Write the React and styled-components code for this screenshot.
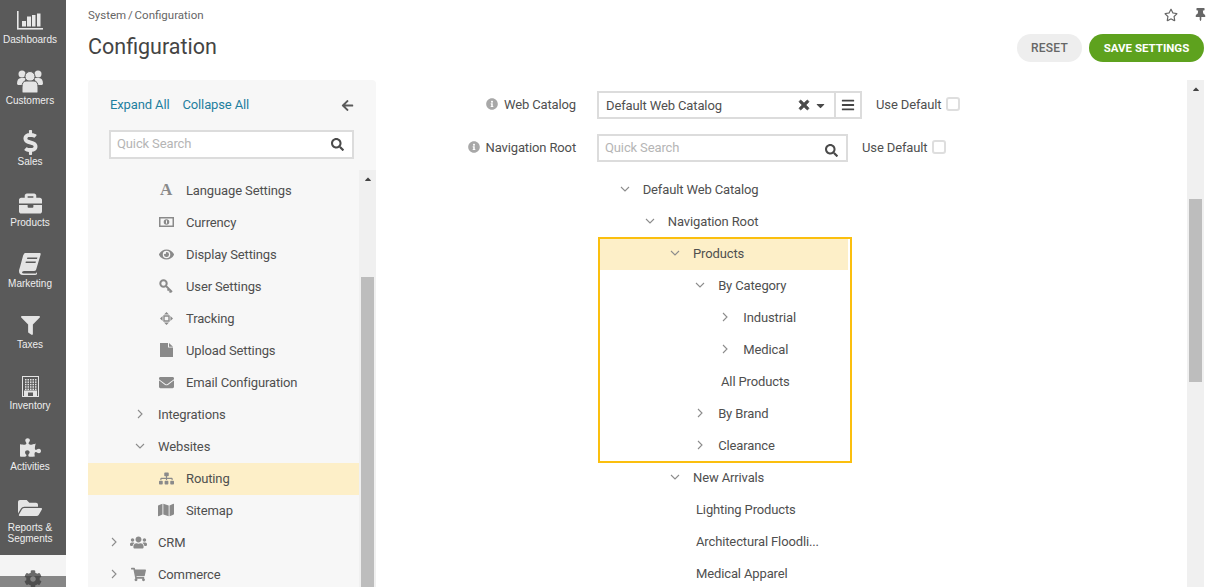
import React from "react";
import styled, { createGlobalStyle } from "styled-components";
import {
  FaDollarSign, FaBriefcase, FaFilter, FaPuzzlePiece, FaFolderOpen, FaCog,
  FaEye, FaEnvelope, FaSitemap, FaMap, FaUsers,
  FaShoppingCart, FaInfoCircle, FaRegStar, FaThumbtack, FaSearch, FaArrowLeft,
  FaTimes, FaCaretDown, FaCaretUp, FaBars,
} from "react-icons/fa";

const GlobalStyle = createGlobalStyle`
  html, body {
    margin: 0;
    height: 100%;
    overflow: hidden;
    background: #fff;
    font-family: Roboto, "Liberation Sans", sans-serif;
    font-size: 13px;
    letter-spacing: -0.13px;
    color: #4f4f4f;
  }
`;

const Shell = styled.div`
  display: flex;
  height: 587px;
  overflow: hidden;
`;

const Rail = styled.nav`
  position: relative;
  flex: 0 0 66px;
  background: #5a5a5a;
  overflow: hidden;
`;

const RailItem = styled.div`
  height: ${(p) => p.$height || 61}px;
  display: flex;
  flex-direction: column;
  align-items: center;
  box-sizing: border-box;
  padding: ${(p) => (p.$active ? "12px 0 0" : "8px 6px 0 0")};
  color: #e4e4e4;
  background: ${(p) => (p.$active ? "#f4f4f4" : "transparent")};
`;

const RailIcon = styled.div`
  height: 24px;
  display: flex;
  align-items: center;
  justify-content: center;
  color: ${(p) => p.$color || "#e4e4e4"};
`;

const RailLabel = styled.div`
  margin-top: 2px;
  font-family: "Liberation Sans", Arial, sans-serif;
  font-size: 10px;
  letter-spacing: 0;
  line-height: 11px;
  text-align: center;
  color: #eee;
`;

const RailShade = styled.div`
  position: absolute;
  left: 0;
  right: 0;
  bottom: 0;
  height: 11px;
  background: rgba(60, 60, 60, 0.6);
`;

const Main = styled.main`
  flex: 1;
  min-width: 0;
  display: flex;
  flex-direction: column;
  padding: 0 21px 0 22px;
`;

const Header = styled.header`
  flex: 0 0 80px;
  display: flex;
  justify-content: space-between;
`;

const Crumbs = styled.div`
  font-size: 11.5px;
  letter-spacing: 0;
  word-spacing: -1px;
  line-height: 14px;
  padding-top: 8px;
  color: #666;
`;

const Title = styled.h1`
  margin: 10px 0 0;
  font-size: 21.5px;
  letter-spacing: 0;
  line-height: 30px;
  font-weight: 400;
  color: #444;
`;

const HeaderSide = styled.div`
  display: flex;
  flex-direction: column;
  align-items: flex-end;
`;

const Shortcuts = styled.div`
  height: 34px;
  display: flex;
  align-items: flex-start;
  padding-top: 8px;
  margin-right: -3px;
  box-sizing: border-box;
  gap: 16px;
  color: #666;
  svg { display: block; }
`;

const Actions = styled.div`
  display: flex;
  gap: 7px;
`;

const PillButton = styled.button`
  height: 28px;
  padding: 0;
  width: ${(p) => p.$width}px;
  border: 0;
  border-radius: 14px;
  font-family: inherit;
  font-size: ${(p) => (p.$primary ? 11.5 : 12)}px;
  letter-spacing: ${(p) => (p.$primary ? 0 : 0.2)}px;
  font-weight: ${(p) => (p.$primary ? 700 : 500)};
  color: ${(p) => (p.$primary ? "#fff" : "#666")};
  background: ${(p) => (p.$primary ? "#5ea21e" : "#eeeeee")};
`;

const Body = styled.div`
  flex: 1;
  min-height: 0;
  display: flex;
`;

const SidePanel = styled.aside`
  flex: 0 0 288px;
  display: flex;
  flex-direction: column;
  background: #f7f7f7;
  border-radius: 4px 4px 0 0;
`;

const SideTools = styled.div`
  flex: 0 0 90px;
  box-sizing: border-box;
  padding: 14px 22px 0 21px;
`;

const LinkRow = styled.div`
  display: flex;
  align-items: center;
  height: 20px;
  gap: 13px;
  margin-bottom: 16px;
  padding-left: 1px;
`;

const TextLink = styled.a`
  color: #1f7f9f;
`;

const BackArrow = styled.span`
  margin: 2px 0 0 auto;
  display: flex;
  color: #5a5a5a;
`;

const SearchBox = styled.div`
  box-sizing: border-box;
  width: ${(p) => p.$width}px;
  height: ${(p) => p.$height || 28}px;
  display: flex;
  align-items: center;
  justify-content: space-between;
  padding: 0 8px 0 6px;
  border: 2px solid #dcdcdc;
  background: #fff;
  color: #b5b5b5;
  svg {
    color: #4a4a4a;
    margin-top: ${(p) => p.$iconDrop || 0}px;
  }
`;

const Placeholder = styled.span`
  margin-bottom: 2px;
`;

const SideScrollArea = styled.div`
  flex: 1;
  min-height: 0;
  display: flex;
`;

const SideTree = styled.div`
  flex: 1;
  padding-top: 5px;
  overflow: hidden;
`;

const Row = styled.div`
  height: 32px;
  box-sizing: border-box;
  display: flex;
  align-items: center;
  padding-left: ${(p) => p.$indent}px;
  background: ${(p) => (p.$selected ? "#fdefc8" : "transparent")};
  white-space: nowrap;
`;

const SideItem = styled(Row)`
  padding-bottom: 2px;
`;

const TreeItem = styled(Row)`
  box-shadow: ${(p) => (p.$selected ? "0 1px 0 #fdefc8" : "none")};
`;

const Toggle = styled.span`
  flex: 0 0 12px;
  display: flex;
  justify-content: center;
  margin-right: ${(p) => p.$gap ?? 0}px;
`;

const Glyph = styled.span`
  flex: 0 0 24px;
  display: flex;
  justify-content: center;
  margin-right: 8px;
  color: #8a8a8a;
`;

const SerifA = styled.span`
  font-family: "Liberation Serif", serif;
  font-size: 17px;
  font-weight: 700;
  line-height: 16px;
  color: #8a8a8a;
`;

const Scrollbar = styled.div`
  flex: 0 0 ${(p) => p.$width}px;
  box-sizing: border-box;
  display: flex;
  flex-direction: column;
  align-items: center;
  background: #f0f0f0;
  padding-top: 4px;
`;

const ScrollThumb = styled.div`
  flex: ${(p) => (p.$height ? `0 0 ${p.$height}px` : 1)};
  width: 13px;
  margin-top: ${(p) => p.$offset}px;
  background: #bdbdbd;
`;

const Content = styled.section`
  flex: 1;
  min-width: 0;
  display: flex;
`;

const ContentInner = styled.div`
  flex: 1;
  min-width: 0;
  padding-top: 11px;
  overflow: hidden;
`;

const Field = styled.div`
  display: flex;
  align-items: center;
  height: 28px;
  margin-bottom: ${(p) => p.$gap}px;
`;

const FieldLabel = styled.label`
  flex: 0 0 200px;
  box-sizing: border-box;
  margin-right: 21px;
  padding-bottom: 2px;
  display: flex;
  align-items: center;
  justify-content: flex-end;
  gap: 6px;
  svg { color: #a8a8a8; }
`;

const SelectBox = styled.div`
  box-sizing: border-box;
  width: 265px;
  height: 28px;
  display: flex;
  border: 2px solid #dcdcdc;
`;

const SelectValue = styled.div`
  flex: 1;
  display: flex;
  align-items: center;
  padding: 0 7px 0 7px;
  svg { color: #4a4a4a; }
`;

const SelectText = styled.span`
  margin-right: auto;
`;

const SelectMenu = styled.div`
  flex: 0 0 24px;
  display: flex;
  align-items: center;
  justify-content: center;
  border-left: 2px solid #dcdcdc;
  color: #444;
`;

const UseDefault = styled.label`
  display: flex;
  align-items: center;
  gap: 5px;
  margin-left: 14px;
  padding-bottom: 2px;
`;

const CheckBox = styled.span`
  box-sizing: border-box;
  width: 14px;
  height: 14px;
  border: 2px solid #dedede;
  border-radius: 3px;
  background: #fff;
`;

const Tree = styled.div`
  margin: 11px 0 0 224px;
  width: 248px;
`;

const TreeMarked = styled.div`
  position: relative;
  &::after {
    content: "";
    position: absolute;
    inset: 0 -4px -2px -2px;
    border: 2px solid #fbbf0e;
    pointer-events: none;
  }
`;

const Chevron = ({ open }) => (
  <svg width="10" height="10" viewBox="0 0 10 10" fill="none" stroke="#8c8c8c" strokeWidth="1.1">
    {open ? <polyline points="1,3 5,7 9,3" /> : <polyline points="3,1 7,5 3,9" />}
  </svg>
);

const BarsIcon = () => (
  <svg width="26" height="19" viewBox="0 0 26 19" fill="#e8e8e8">
    <rect x="0" y="0" width="1.6" height="18" />
    <rect x="0" y="17" width="26" height="1.6" />
    <rect x="5" y="10" width="4" height="5.5" />
    <rect x="10" y="5.5" width="4" height="10" />
    <rect x="15" y="4" width="3.5" height="11.5" />
    <rect x="20" y="2.5" width="3.5" height="13" />
  </svg>
);

const PeopleIcon = () => (
  <svg width="26" height="23" viewBox="0 0 26 23" fill="#e4e4e4">
    <circle cx="5" cy="4" r="3.5" />
    <circle cx="21" cy="4" r="3.5" />
    <path d="M0 14 Q0 8 4 8 L9 8 L6 15 L1 15Z" />
    <path d="M26 14 Q26 8 22 8 L17 8 L20 15 L25 15Z" />
    <circle cx="13" cy="6.5" r="5" stroke="#5a5a5a" strokeWidth="1" />
    <path d="M5 22 L5 17 Q5 11 9 11 L17 11 Q21 11 21 17 L21 22 Q21 23 20 23 L6 23 Q5 23 5 22Z" stroke="#5a5a5a" strokeWidth="1" />
  </svg>
);

const BookIcon = () => (
  <svg width="22" height="22" viewBox="0 0 22 22" fill="#e4e4e4">
    <path d="M6 0 L21 0 Q22 0 21.5 2 L17 17 Q16.5 18 15 18 L5 18 Q3 18 3 19.5 Q3 20.5 5 20.5 L17 20.5 L18 19 L18 21 Q17.5 22 16 22 L4 22 Q0 22 0 18 Q0 17 1 14 L4 3 Q5 0 6 0Z" />
    <rect x="8" y="4.5" width="10" height="1.6" fill="#5a5a5a" transform="skewX(-14) translate(1.5 0)" />
    <rect x="7" y="8.5" width="10" height="1.6" fill="#5a5a5a" transform="skewX(-14) translate(2 0)" />
  </svg>
);

const BuildingIcon = () => {
  const windows = [];
  for (let y = 3; y < 13; y += 2.4) {
    for (let x = 3; x < 14; x += 2.5) {
      windows.push(<rect key={`${x}-${y}`} x={x} y={y} width="1.5" height="1.5" />);
    }
  }
  return (
    <svg width="17" height="21" viewBox="0 0 17 21" fill="#5a5a5a">
      <rect width="17" height="21" fill="#e4e4e4" />
      <rect x="1" y="1" width="15" height="19" />
      <g fill="#e4e4e4">{windows}</g>
      <rect x="2" y="14.5" width="13" height="5.5" fill="#e4e4e4" />
      <rect x="6" y="16.5" width="5" height="3.5" />
    </svg>
  );
};

const MoneyIcon = () => (
  <svg width="15" height="10" viewBox="0 0 15 10">
    <rect x="0.75" y="0.75" width="13.5" height="8.5" fill="none" stroke="#8a8a8a" strokeWidth="1.5" />
    <circle cx="7.5" cy="5" r="2.8" fill="#8a8a8a" />
    <rect x="7" y="3.4" width="1" height="3.2" fill="#f7f7f7" />
  </svg>
);

const KeyIcon = () => (
  <svg width="14" height="14" viewBox="0 0 14 14" fill="none" stroke="#8a8a8a">
    <circle cx="4.5" cy="4.5" r="3.2" strokeWidth="2" />
    <path d="M7 7 L13 13 M10 10 L8.5 11.5 M12 12 L10.5 13.5" strokeWidth="1.8" />
  </svg>
);

const TrackingIcon = () => (
  <svg width="13" height="13" viewBox="0 0 13 13" fill="#8a8a8a">
    <path d="M6.5 0 L9 2.6 L4 2.6Z M6.5 13 L9 10.4 L4 10.4Z M0 6.5 L2.6 4 L2.6 9Z M13 6.5 L10.4 4 L10.4 9Z" />
    <path d="M4 4 L9 4 L9 9 L4 9Z" fill="none" stroke="#8a8a8a" strokeWidth="1.4" />
  </svg>
);

const FileIcon = () => (
  <svg width="13" height="14" viewBox="0 0 13 14" fill="#8a8a8a">
    <path d="M0 0 L8 0 L8 4.5 L13 4.5 L13 14 L0 14Z" />
    <path d="M9 0 L13 3.8 L9 3.8Z" />
  </svg>
);

const railItems = [
  { label: "Dashboards", icon: <BarsIcon /> },
  { label: "Customers", icon: <PeopleIcon /> },
  { label: "Sales", icon: <FaDollarSign size={25} /> },
  { label: "Products", icon: <FaBriefcase size={23} /> },
  { label: "Marketing", icon: <BookIcon /> },
  { label: "Taxes", icon: <FaFilter size={19} /> },
  { label: "Inventory", icon: <BuildingIcon /> },
  { label: "Activities", icon: <FaPuzzlePiece size={21} /> },
  { label: <>Reports &amp;<br />Segments</>, icon: <FaFolderOpen size={24} />, height: 67 },
];

const sideRows = [
  { label: "Language Settings", indent: 66, icon: <SerifA>A</SerifA> },
  { label: "Currency", indent: 66, icon: <MoneyIcon /> },
  { label: "Display Settings", indent: 66, icon: <FaEye size={15} /> },
  { label: "User Settings", indent: 66, icon: <KeyIcon /> },
  { label: "Tracking", indent: 66, icon: <TrackingIcon /> },
  { label: "Upload Settings", indent: 66, icon: <FileIcon /> },
  { label: "Email Configuration", indent: 66, icon: <FaEnvelope size={15} /> },
  { label: "Integrations", indent: 46, toggle: "closed", gap: 12 },
  { label: "Websites", indent: 46, toggle: "open", gap: 12 },
  { label: "Routing", indent: 66, icon: <FaSitemap size={15} />, selected: true },
  { label: "Sitemap", indent: 66, icon: <FaMap size={16} /> },
  { label: "CRM", indent: 20, toggle: "closed", icon: <FaUsers size={17} />, gap: 6 },
  { label: "Commerce", indent: 20, toggle: "closed", icon: <FaShoppingCart size={15} />, gap: 6 },
];

const treeTop = [
  { label: "Default Web Catalog", level: 0, toggle: "open" },
  { label: "Navigation Root", level: 1, toggle: "open" },
];

const treeMarked = [
  { label: "Products", level: 2, toggle: "open", selected: true },
  { label: "By Category", level: 3, toggle: "open" },
  { label: "Industrial", level: 4, toggle: "closed" },
  { label: "Medical", level: 4, toggle: "closed" },
  { label: "All Products", leaf: 121 },
  { label: "By Brand", level: 3, toggle: "closed" },
  { label: "Clearance", level: 3, toggle: "closed" },
];

const treeRest = [
  { label: "New Arrivals", level: 2, toggle: "open" },
  { label: "Lighting Products", leaf: 96 },
  { label: "Architectural Floodli...", leaf: 96 },
  { label: "Medical Apparel", leaf: 96 },
];

const SideRow = ({ row }) => (
  <SideItem $indent={row.indent} $selected={row.selected}>
    {row.toggle && (
      <Toggle $gap={row.gap}>
        <Chevron open={row.toggle === "open"} />
      </Toggle>
    )}
    {row.icon && <Glyph>{row.icon}</Glyph>}
    {row.label}
  </SideItem>
);

const TreeRow = ({ row }) => (
  <TreeItem $indent={row.leaf ?? 18.7 + row.level * 25.15} $selected={row.selected}>
    {row.toggle && (
      <Toggle $gap={12}>
        <Chevron open={row.toggle === "open"} />
      </Toggle>
    )}
    {row.label}
  </TreeItem>
);

const App = () => (
  <Shell>
    <GlobalStyle />
    <Rail>
      {railItems.map((item, i) => (
        <RailItem key={i} $height={item.height}>
          <RailIcon>{item.icon}</RailIcon>
          <RailLabel>{item.label}</RailLabel>
        </RailItem>
      ))}
      <RailItem $active>
        <RailIcon $color="#6a6a6a"><FaCog size={18} /></RailIcon>
      </RailItem>
      <RailShade />
    </Rail>
    <Main>
      <Header>
        <div>
          <Crumbs>System / Configuration</Crumbs>
          <Title>Configuration</Title>
        </div>
        <HeaderSide>
          <Shortcuts>
            <FaRegStar size={14} />
            <FaThumbtack size={13} />
          </Shortcuts>
          <Actions>
            <PillButton $width={65}>RESET</PillButton>
            <PillButton $width={115} $primary>SAVE SETTINGS</PillButton>
          </Actions>
        </HeaderSide>
      </Header>
      <Body>
        <SidePanel>
          <SideTools>
            <LinkRow>
              <TextLink>Expand All</TextLink>
              <TextLink>Collapse All</TextLink>
              <BackArrow><FaArrowLeft size={13} /></BackArrow>
            </LinkRow>
            <SearchBox $width={245} $height={29}>
              <Placeholder>Quick Search</Placeholder>
              <FaSearch size={13} />
            </SearchBox>
          </SideTools>
          <SideScrollArea>
            <SideTree>
              {sideRows.map((row) => <SideRow key={row.label} row={row} />)}
            </SideTree>
            <Scrollbar $width={17}>
              <FaCaretUp size={10} color="#444" />
              <ScrollThumb $offset={93} />
            </Scrollbar>
          </SideScrollArea>
        </SidePanel>
        <Content>
          <ContentInner>
            <Field $gap={15}>
              <FieldLabel><FaInfoCircle size={12} />Web Catalog</FieldLabel>
              <SelectBox>
                <SelectValue>
                  <SelectText>Default Web Catalog</SelectText>
                  <FaTimes size={14} stroke="currentColor" strokeWidth={30} />
                  <FaCaretDown size={13} style={{ marginLeft: 3 }} />
                </SelectValue>
                <SelectMenu><FaBars size={14} /></SelectMenu>
              </SelectBox>
              <UseDefault>Use Default<CheckBox /></UseDefault>
            </Field>
            <Field $gap={0}>
              <FieldLabel><FaInfoCircle size={12} />Navigation Root</FieldLabel>
              <SearchBox $width={251} $iconDrop={4}>
                <Placeholder>Quick Search</Placeholder>
                <FaSearch size={13} />
              </SearchBox>
              <UseDefault>Use Default<CheckBox /></UseDefault>
            </Field>
            <Tree>
              {treeTop.map((row) => <TreeRow key={row.label} row={row} />)}
              <TreeMarked>
                {treeMarked.map((row) => <TreeRow key={row.label} row={row} />)}
              </TreeMarked>
              {treeRest.map((row) => <TreeRow key={row.label} row={row} />)}
            </Tree>
          </ContentInner>
          <Scrollbar $width={17}>
            <FaCaretUp size={10} color="#444" />
            <ScrollThumb $offset={105} $height={183} />
          </Scrollbar>
        </Content>
      </Body>
    </Main>
  </Shell>
);

export default App;
